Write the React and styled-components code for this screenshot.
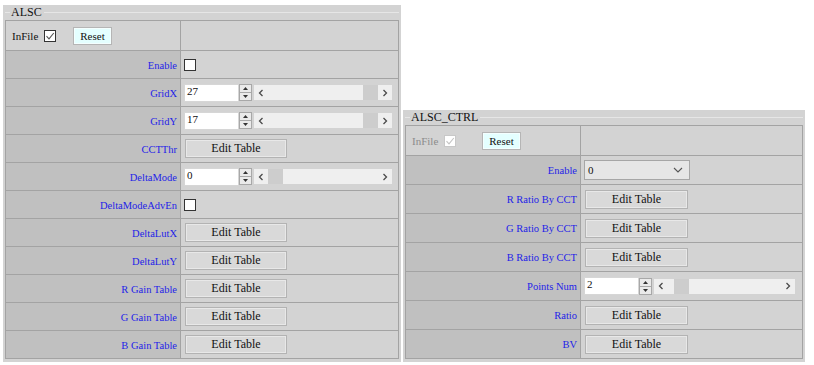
import React from "react";
import styled, { createGlobalStyle } from "styled-components";

const GlobalStyle = createGlobalStyle`
  body {
    margin: 0;
    background: #ffffff;
    font-family: "Liberation Serif", "Times New Roman", serif;
  }
`;

const Page = styled.div`
  display: flex;
  align-items: flex-end;
  gap: 2px;
  padding: 5px 0 0 3px;
`;

const Panel = styled.div`
  width: ${(p) => p.$width}px;
  box-sizing: border-box;
  background: #d3d3d3;
  padding: 0 2px 3px 2px;
`;

const PanelTitle = styled.div`
  display: flex;
  align-items: center;
  height: 15px;
  font-size: 12px;
  color: #111;
  &::before,
  &::after {
    content: "";
    height: 1px;
    background: #e6e6e6;
  }
  &::before {
    width: 5px;
    margin-right: 1px;
  }
  &::after {
    flex: 1;
    margin-left: 2px;
  }
`;

const Grid = styled.div`
  display: grid;
  grid-template-columns: ${(p) => p.$label}px 1fr;
  border-top: 1px solid #a3a3a3;
  border-left: 1px solid #a3a3a3;
`;

const Cell = styled.div`
  box-sizing: border-box;
  height: ${(p) => p.$h}px;
  border-right: 1px solid #a3a3a3;
  border-bottom: 1px solid #a3a3a3;
  display: flex;
  align-items: center;
`;

const HeadCell = styled(Cell)`
  background: #d3d3d3;
  padding-left: 6px;
`;

const LabelCell = styled(Cell)`
  background: #c0c0c0;
  justify-content: flex-end;
  padding: 1px 3px 0 0;
  font-size: 10.5px;
  color: #2323e8;
`;

const ValueCell = styled(Cell)`
  background: #d3d3d3;
  padding-left: 3px;
`;

const InFile = styled.span`
  font-size: 11px;
  color: ${(p) => (p.$disabled ? "#8c8c8c" : "#111")};
  margin-right: 6px;
`;

const Box = styled.span`
  width: 12px;
  height: 12px;
  box-sizing: border-box;
  background: #fff;
  border: 1px solid ${(p) => (p.$disabled ? "#c8c8c8" : "#333")};
  display: inline-flex;
  align-items: center;
  justify-content: center;
`;

const ResetButton = styled.span`
  margin-left: ${(p) => p.$gap}px;
  height: 18px;
  padding: 0 6px;
  box-sizing: border-box;
  display: inline-flex;
  align-items: center;
  font-size: 11px;
  color: #111;
  background: #e4ffff;
  border: 1px solid #b5b5b5;
  box-shadow: inset 0 0 0 1px #f4ffff;
`;

const EditButton = styled.span`
  width: ${(p) => p.$w}px;
  height: 19px;
  box-sizing: border-box;
  display: inline-flex;
  align-items: center;
  justify-content: center;
  font-size: 12px;
  color: #111;
  background: #d9d9d9;
  border: 1px solid #b3b3b3;
  box-shadow: inset 0 0 0 1px #e8e8e8;
  margin-left: 1px;
`;

const Field = styled.div`
  display: flex;
  align-items: center;
`;

const NumInput = styled.span`
  width: 55px;
  height: 18px;
  box-sizing: border-box;
  background: #fff;
  border: 1px solid #d6d6d6;
  font-size: 11px;
  color: #111;
  padding: 0 2px;
  line-height: 13px;
`;

const Spin = styled.span`
  width: 13px;
  height: 17px;
  display: inline-flex;
`;

const Scroll = styled.div`
  margin-left: 2px;
  width: ${(p) => p.$w}px;
  height: 15px;
  background: #efefef;
  display: flex;
  align-items: center;
`;

const Arrow = styled.span`
  width: 14px;
  height: 15px;
  display: inline-flex;
  align-items: center;
  justify-content: center;
`;

const Track = styled.div`
  flex: 1;
  height: 15px;
  position: relative;
`;

const Thumb = styled.span`
  position: absolute;
  top: 0;
  width: 15px;
  height: 15px;
  background: #cdcdcd;
`;

const Select = styled.div`
  width: 106px;
  height: 20px;
  box-sizing: border-box;
  border: 1px solid #a6a6a6;
  background: #e6e6e6;
  display: flex;
  align-items: center;
  justify-content: space-between;
  padding: 0 6px 0 3px;
  font-size: 11px;
  color: #111;
`;

const Check = ({ checked, disabled }) => (
  <Box $disabled={disabled}>
    {checked && (
      <svg width="10" height="10" viewBox="0 0 10 10">
        <path
          d="M1.5 5.2 L4 7.8 L8.8 2"
          fill="none"
          stroke={disabled ? "#c4c4c4" : "#555"}
          strokeWidth="1.1"
        />
      </svg>
    )}
  </Box>
);

const Chevron = ({ dir }) => (
  <svg width="6" height="8" viewBox="0 0 6 8">
    <path
      d={dir === "left" ? "M4.5 1 L1.5 4 L4.5 7" : "M1.5 1 L4.5 4 L1.5 7"}
      fill="none"
      stroke="#4a4a4a"
      strokeWidth="1.3"
    />
  </svg>
);

const SpinIcon = () => (
  <svg width="13" height="17" viewBox="0 0 13 17">
    <rect x="0.5" y="0.5" width="12" height="16" fill="#eaeaea" stroke="#a8a8a8" />
    <line x1="1" y1="8.5" x2="12" y2="8.5" stroke="#a8a8a8" />
    <path d="M4 6 L6.5 3 L9 6 Z" fill="#333" />
    <path d="M4 11 L6.5 14 L9 11 Z" fill="#333" />
  </svg>
);

const NumberField = ({ value, pos, width }) => (
  <Field>
    <NumInput>{value}</NumInput>
    <Spin>
      <SpinIcon />
    </Spin>
    <Scroll $w={width}>
      <Arrow>
        <Chevron dir="left" />
      </Arrow>
      <Track>
        <Thumb style={{ left: `calc(${pos * 100}% - ${pos * 15}px)` }} />
      </Track>
      <Arrow>
        <Chevron dir="right" />
      </Arrow>
    </Scroll>
  </Field>
);

const DropDown = ({ value }) => (
  <Select>
    <span>{value}</span>
    <svg width="10" height="6" viewBox="0 0 10 6">
      <path d="M1 1 L5 5 L9 1" fill="none" stroke="#555" strokeWidth="1.1" />
    </svg>
  </Select>
);

const renderControl = (row, btnWidth, scrollWidth) => {
  switch (row.kind) {
    case "check":
      return <Check />;
    case "table":
      return <EditButton $w={btnWidth}>Edit Table</EditButton>;
    case "num":
      return <NumberField value={row.value} pos={row.pos} width={scrollWidth} />;
    case "select":
      return <DropDown value={row.value} />;
    default:
      return null;
  }
};

const alscRows = [
  { label: "Enable", kind: "check" },
  { label: "GridX", kind: "num", value: "27", pos: 1 },
  { label: "GridY", kind: "num", value: "17", pos: 1 },
  { label: "CCTThr", kind: "table" },
  { label: "DeltaMode", kind: "num", value: "0", pos: 0 },
  { label: "DeltaModeAdvEn", kind: "check" },
  { label: "DeltaLutX", kind: "table" },
  { label: "DeltaLutY", kind: "table" },
  { label: "R Gain Table", kind: "table" },
  { label: "G Gain Table", kind: "table" },
  { label: "B Gain Table", kind: "table" },
];

const ctrlRows = [
  { label: "Enable", kind: "select", value: "0" },
  { label: "R Ratio By CCT", kind: "table" },
  { label: "G Ratio By CCT", kind: "table" },
  { label: "B Ratio By CCT", kind: "table" },
  { label: "Points Num", kind: "num", value: "2", pos: 0.06 },
  { label: "Ratio", kind: "table" },
  { label: "BV", kind: "table" },
];

const ParamPanel = ({ title, width, rows, rowHeight, disabled, btnWidth, scrollWidth }) => (
  <Panel $width={width}>
    <PanelTitle>{title}</PanelTitle>
    <Grid $label={175}>
      <HeadCell $h={30}>
        <InFile $disabled={disabled}>InFile</InFile>
        <Check checked disabled={disabled} />
        <ResetButton $gap={disabled ? 26 : 17}>Reset</ResetButton>
      </HeadCell>
      <ValueCell $h={30} />
      {rows.map((row) => (
        <React.Fragment key={row.label}>
          <LabelCell $h={rowHeight}>{row.label}</LabelCell>
          <ValueCell $h={rowHeight}>{renderControl(row, btnWidth, scrollWidth)}</ValueCell>
        </React.Fragment>
      ))}
    </Grid>
  </Panel>
);

export default function App() {
  return (
    <>
      <GlobalStyle />
      <Page>
        <ParamPanel
          title="ALSC"
          width={398}
          rows={alscRows}
          rowHeight={28}
          btnWidth={102}
          scrollWidth={138}
        />
        <ParamPanel
          title="ALSC_CTRL"
          width={402}
          rows={ctrlRows}
          rowHeight={29}
          disabled
          btnWidth={103}
          scrollWidth={141}
        />
      </Page>
    </>
  );
}
